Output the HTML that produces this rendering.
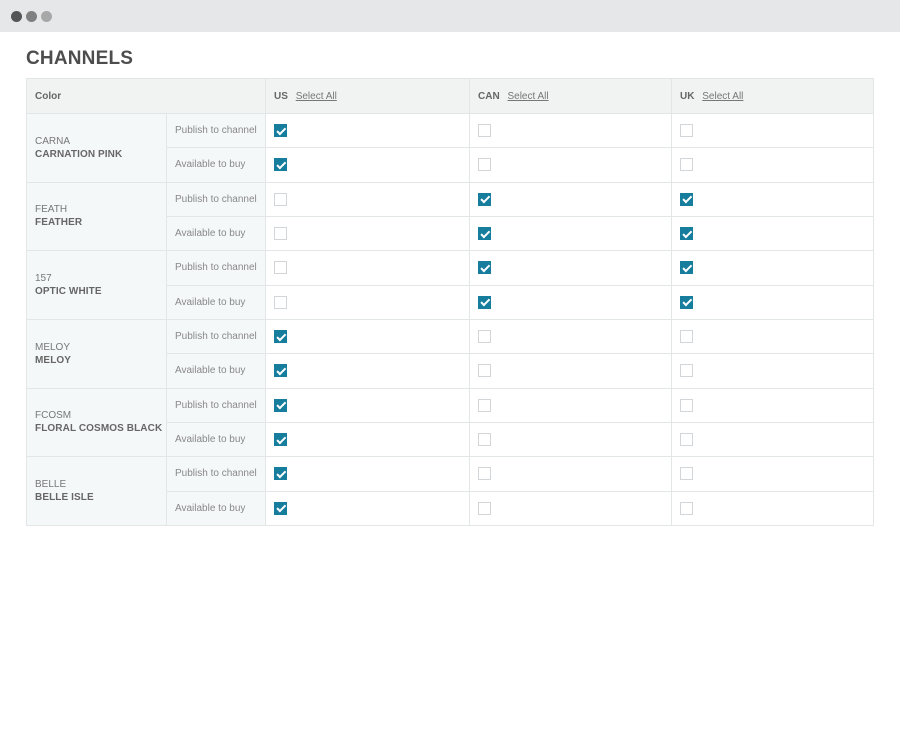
<!DOCTYPE html>
<html><head><meta charset="utf-8"><style>
*{box-sizing:border-box;margin:0;padding:0}
body{width:900px;height:750px;background:#fff;font-family:"Liberation Sans",sans-serif;color:#777;position:relative;overflow:hidden}
.bar{position:absolute;left:0;top:0;width:900px;height:32px;background:#e6e7e8}
.dot{position:absolute;top:11px;width:11px;height:11px;border-radius:50%}
h1{position:absolute;left:26px;top:48px;font-size:19px;font-weight:bold;color:#4d4d4d;letter-spacing:0.2px}
table{position:absolute;left:26px;top:78px;width:847px;border-collapse:collapse;table-layout:fixed;font-size:10px}
td,th{border:1px solid #e3e6e7;padding:0 8px;text-align:left;vertical-align:middle;white-space:nowrap;overflow:hidden}
th{background:#f1f2f2;height:35px;font-weight:bold;color:#666}
th a{color:#777;text-decoration:underline;font-weight:normal;margin-left:5px}
tr.r td{height:34.33px;line-height:13px}
td.c{background:#f5f8f9;line-height:13px}
td.c b{color:#666;letter-spacing:0.1px}
td.l{background:#f5f8f9;color:#888;padding:0 0 0 8px}
.cb{display:inline-block;width:13px;height:13px;border:1px solid #d3d6d8;background:#fff;vertical-align:middle;position:relative}
.on{background:#167d9c;border-color:#167d9c}
.on:after{content:"";position:absolute;left:3.5px;top:0.5px;width:3px;height:6.5px;border:solid #fff;border-width:0 2px 2px 0;transform:rotate(45deg)}
</style></head><body>
<div class="bar"><div class="dot" style="left:11px;background:#555"></div><div class="dot" style="left:26px;background:#808080"></div><div class="dot" style="left:41px;background:#a8a8a8"></div></div>
<h1>CHANNELS</h1>
<table>
<colgroup><col style="width:140px"><col style="width:99px"><col style="width:204px"><col style="width:202px"><col style="width:202px"></colgroup>
<tr><th colspan="2">Color</th><th>US <a>Select All</a></th><th>CAN <a>Select All</a></th><th>UK <a>Select All</a></th></tr>
<tr class="r"><td class="c" rowspan="2">CARNA<br><b>CARNATION PINK</b></td><td class="l">Publish to channel</td><td><span class="cb on"></span></td><td><span class="cb"></span></td><td><span class="cb"></span></td></tr>
<tr class="r"><td class="l">Available to buy</td><td><span class="cb on"></span></td><td><span class="cb"></span></td><td><span class="cb"></span></td></tr>
<tr class="r"><td class="c" rowspan="2">FEATH<br><b>FEATHER</b></td><td class="l">Publish to channel</td><td><span class="cb"></span></td><td><span class="cb on"></span></td><td><span class="cb on"></span></td></tr>
<tr class="r"><td class="l">Available to buy</td><td><span class="cb"></span></td><td><span class="cb on"></span></td><td><span class="cb on"></span></td></tr>
<tr class="r"><td class="c" rowspan="2">157<br><b>OPTIC WHITE</b></td><td class="l">Publish to channel</td><td><span class="cb"></span></td><td><span class="cb on"></span></td><td><span class="cb on"></span></td></tr>
<tr class="r"><td class="l">Available to buy</td><td><span class="cb"></span></td><td><span class="cb on"></span></td><td><span class="cb on"></span></td></tr>
<tr class="r"><td class="c" rowspan="2">MELOY<br><b>MELOY</b></td><td class="l">Publish to channel</td><td><span class="cb on"></span></td><td><span class="cb"></span></td><td><span class="cb"></span></td></tr>
<tr class="r"><td class="l">Available to buy</td><td><span class="cb on"></span></td><td><span class="cb"></span></td><td><span class="cb"></span></td></tr>
<tr class="r"><td class="c" rowspan="2">FCOSM<br><b>FLORAL COSMOS BLACK</b></td><td class="l">Publish to channel</td><td><span class="cb on"></span></td><td><span class="cb"></span></td><td><span class="cb"></span></td></tr>
<tr class="r"><td class="l">Available to buy</td><td><span class="cb on"></span></td><td><span class="cb"></span></td><td><span class="cb"></span></td></tr>
<tr class="r"><td class="c" rowspan="2">BELLE<br><b>BELLE ISLE</b></td><td class="l">Publish to channel</td><td><span class="cb on"></span></td><td><span class="cb"></span></td><td><span class="cb"></span></td></tr>
<tr class="r"><td class="l">Available to buy</td><td><span class="cb on"></span></td><td><span class="cb"></span></td><td><span class="cb"></span></td></tr>
</table>
</body></html>
